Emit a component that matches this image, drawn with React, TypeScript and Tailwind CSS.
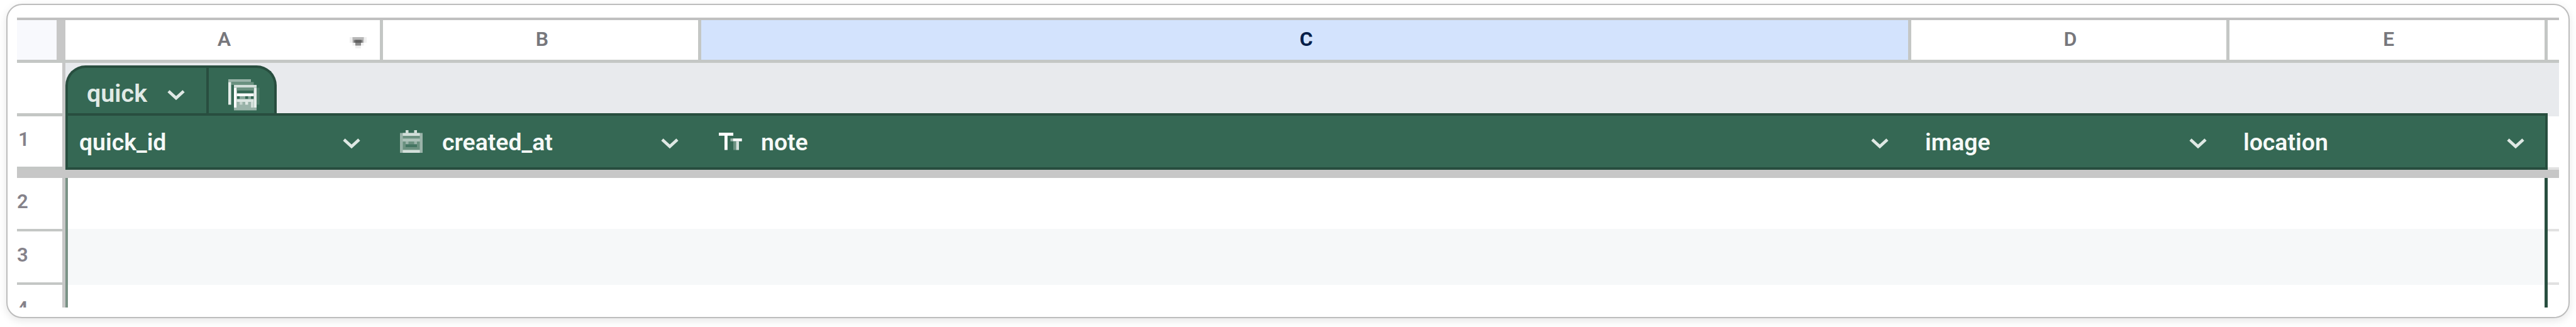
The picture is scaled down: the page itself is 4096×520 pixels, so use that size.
import React from "react";

function Chevron({ className = "" }: { className?: string }) {
  return (
    <svg viewBox="0 0 28 18" className={`h-[18px] w-[28px] shrink-0 ${className}`} fill="none">
      <path d="M2 2 L14 13 L26 2" stroke="#dfe8e4" strokeWidth="4.8" />
    </svg>
  );
}

function CalendarIcon() {
  return (
    <svg viewBox="0 0 36 36" className="h-[36px] w-[36px] shrink-0">
      <rect x="9" y="0" width="4.5" height="6" fill="#d3dfda" />
      <rect x="22.5" y="0" width="4.5" height="6" fill="#d3dfda" />
      <rect x="0" y="4.5" width="36" height="31.5" fill="#9ab3a9" />
      <rect x="4.5" y="4.5" width="27" height="4.5" fill="#d3dfda" />
      <rect x="4.5" y="9" width="27" height="4.5" fill="#6b9180" />
      <rect x="4.5" y="13.5" width="27" height="4.5" fill="#adc2b9" />
      <rect x="4.5" y="18" width="27" height="13.5" fill="#6b9180" />
      <rect x="9" y="18" width="4.5" height="4.5" fill="#9ab3a9" />
      <rect x="22.5" y="18" width="4.5" height="4.5" fill="#9ab3a9" />
      <rect x="9" y="22.5" width="18" height="4.5" fill="#447562" />
      <rect x="4.5" y="31.5" width="27" height="4.5" fill="#d3dfda" />
    </svg>
  );
}

function TextTypeIcon() {
  return (
    <svg viewBox="0 0 37 28" className="h-[28px] w-[37px] shrink-0">
      <rect x="0" y="0" width="23" height="4.8" fill="#ffffff" />
      <rect x="9" y="0" width="4.8" height="27.5" fill="#ffffff" />
      <rect x="18.5" y="9.2" width="4.5" height="4.5" fill="#9ab3a9" />
      <rect x="22.7" y="9.2" width="14" height="4.5" fill="#ffffff" />
      <rect x="23" y="13.7" width="4.5" height="13.8" fill="#6b9180" />
      <rect x="27.5" y="13.7" width="4.5" height="13.8" fill="#d3dfda" />
    </svg>
  );
}

function TableIcon() {
  return (
    <svg viewBox="0 0 50 50" className="h-[50px] w-[50px] shrink-0">
      <rect x="0" y="0" width="36" height="4.5" fill="#9ab3a9" />
      <rect x="4.5" y="4.5" width="36" height="4.5" fill="#6b9180" />
      <rect x="0" y="4.5" width="4.5" height="36" fill="#e6edea" />
      <rect x="45" y="13.5" width="4.5" height="27" fill="#4d7c69" />
      <rect x="9" y="9" width="36" height="4.5" fill="#d3dfda" />
      <rect x="9" y="13.5" width="4.5" height="31.5" fill="#ffffff" />
      <rect x="40.5" y="13.5" width="4.5" height="31.5" fill="#e6edea" />
      <rect x="13.5" y="13.5" width="27" height="4.5" fill="#6b9180" />
      <rect x="13.5" y="22.5" width="27" height="4.5" fill="#ffffff" />
      <rect x="18" y="27" width="9" height="4.5" fill="#86a699" />
      <rect x="31.5" y="27" width="4.5" height="4.5" fill="#86a699" />
      <rect x="13.5" y="31.5" width="27" height="4.5" fill="#dde6e2" />
      <rect x="13.5" y="36" width="27" height="9" fill="#9ab3a9" />
      <rect x="18" y="36" width="4.5" height="4.5" fill="#c5d4cd" />
      <rect x="27" y="36" width="4.5" height="4.5" fill="#dde6e2" />
      <rect x="36" y="36" width="4.5" height="9" fill="#d3dfda" />
      <rect x="9" y="45" width="36" height="4.5" fill="#9ab3a9" />
    </svg>
  );
}

function DropArrow() {
  return (
    <svg viewBox="0 0 27 18" className="h-[18px] w-[27px]">
      <path d="M0 0 H27 V9 H22.5 V13.5 H18 V18 H9 V13.5 H4.5 V9 H0 Z" fill="#f0f0f0" />
      <path d="M4.5 0 H22.5 V9 H4.5 Z" fill="#b8b8b8" />
      <path d="M6.5 4.5 H20.5 V9 H6.5 Z" fill="#777777" />
      <path d="M9 4.5 H18 V9 H9 Z" fill="#606060" />
      <path d="M9 9 H18 V13.5 H9 Z" fill="#8c8c8c" />
    </svg>
  );
}

function ColumnHead({ label, width, selected, arrow }: { label: string; width: string; selected?: boolean; arrow?: boolean }) {
  return (
    <div
      className={`relative flex h-full shrink-0 items-center justify-center border-r-[5px] border-[#c4c7c5] pb-[3px] pl-[5px] text-[32px] leading-[60px] ${width} ${
        selected ? "bg-[#d3e3fd] font-bold text-[#041e49]" : "bg-white font-semibold text-[#77777c]"
      }`}
    >
      {label}
      {arrow && (
        <div className="absolute right-[21px] top-[27px]">
          <DropArrow />
        </div>
      )}
    </div>
  );
}

function FieldHead({ label, width, icon, textPad }: { label: string; width: string; icon?: React.ReactNode; textPad: string }) {
  return (
    <div className={`flex h-full shrink-0 items-center pr-[36px] ${width}`}>
      {icon}
      <span className={`pt-[1px] ${textPad}`}>{label}</span>
      <Chevron className="ml-auto mt-[7px]" />
    </div>
  );
}

function Gutter({ label, className = "" }: { label?: string; className?: string }) {
  return (
    <div
      className={`flex h-full w-[77px] shrink-0 items-center border-r-[5px] border-[#c7c7c7] bg-white pb-[5px] text-[31px] font-semibold text-[#85828a] ${className}`}
    >
      {label}
    </div>
  );
}

export default function App() {
  return (
    <div className="h-[520px] w-[4096px] overflow-hidden bg-white pl-[10px] pt-[6px] font-['Roboto',sans-serif]">
      <div className="h-[500px] w-[4076px] rounded-[25px] border-2 border-[#bdbdbd] bg-white px-[15px] pt-[20px] shadow-[0_4px_14px_rgba(0,0,0,0.1)]">
        <div className="flex h-[461px] w-[4042px] flex-col overflow-hidden">
          <div className="flex h-[72px] shrink-0 border-b-[5px] border-t-[4px] border-[#c4c7c5] border-t-[#c0c0c0]">
            <div className="h-full w-[77px] shrink-0 border-r-[14px] border-[#c7c7c7] bg-[#f8f9fd]" />
            <ColumnHead label="A" width="w-[505px]" arrow />
            <ColumnHead label="B" width="w-[506px]" />
            <ColumnHead label="C" width="w-[1924px]" selected />
            <ColumnHead label="D" width="w-[506px]" />
            <ColumnHead label="E" width="w-[506px]" />
          </div>

          <div className="flex h-[80px] shrink-0 bg-[#e8eaed]">
            <Gutter />
            <div className="mt-[4px] flex h-[76px] w-[336px] overflow-hidden rounded-t-[32px] border-x-[4px] border-t-[4px] border-[#284e3f] bg-[#356854]">
              <div className="flex h-full w-[224px] items-center border-r-[4px] border-[#284e3f] pl-[30px] text-[39.5px] font-semibold leading-none text-[#e1eae6]">
                <span className="pt-[9px]">quick</span>
                <Chevron className="ml-[32px] mt-[16px]" />
              </div>
              <div className="pl-[31px] pt-[18px]">
                <TableIcon />
              </div>
            </div>
          </div>

          <div className="flex h-[90px] shrink-0">
            <Gutter label="1" className="border-b-[5px] border-t-[5px] border-b-[#c4c7c5] border-t-[#c4c7c5] pl-[2px]" />
            <div className="flex h-full w-[3947px] shrink-0 border-[4px] border-[#284e3f] bg-[#356854] text-[37.4px] font-semibold leading-[44px] text-[#f5f9f7]">
              <FieldHead label="quick_id" width="w-[501px]" textPad="pl-[18px]" />
              <FieldHead label="created_at" width="w-[506px] pl-[27px]" icon={<CalendarIcon />} textPad="pl-[31px]" />
              <FieldHead label="note" width="w-[1924px] pl-[28px]" icon={<TextTypeIcon />} textPad="pl-[30px]" />
              <FieldHead label="image" width="w-[506px]" textPad="pl-[22px]" />
              <FieldHead label="location" width="w-[505px]" textPad="pl-[22px]" />
            </div>
            <div className="h-full grow border-b-[4px] border-t-[5px] border-b-[#e1e1e1] border-t-[#e8eaed] bg-white" />
          </div>

          <div className="h-[13px] shrink-0 bg-[#c7c7c7]" />

          <div className="flex h-[81px] shrink-0">
            <Gutter label="2" />
            <div className="h-full w-[3947px] shrink-0 border-l-[4px] border-r-[5px] border-l-[#7a9286] border-r-[#284e3f]" />
          </div>
          <div className="flex h-[89px] shrink-0">
            <Gutter label="3" className="border-b-[4px] border-t-[4px] border-b-[#c4c7c5] border-t-[#c4c7c5]" />
            <div className="h-full w-[3947px] shrink-0 border-l-[4px] border-r-[5px] border-l-[#7a9286] border-r-[#284e3f] bg-[#f6f8f9]" />
            <div className="h-full grow border-y-[4px] border-[#e1e1e1]" />
          </div>
          <div className="flex h-[81px] shrink-0">
            <Gutter label="4" />
            <div className="h-full w-[3947px] shrink-0 border-l-[4px] border-r-[5px] border-l-[#7a9286] border-r-[#284e3f]" />
          </div>
        </div>
      </div>
    </div>
  );
}
